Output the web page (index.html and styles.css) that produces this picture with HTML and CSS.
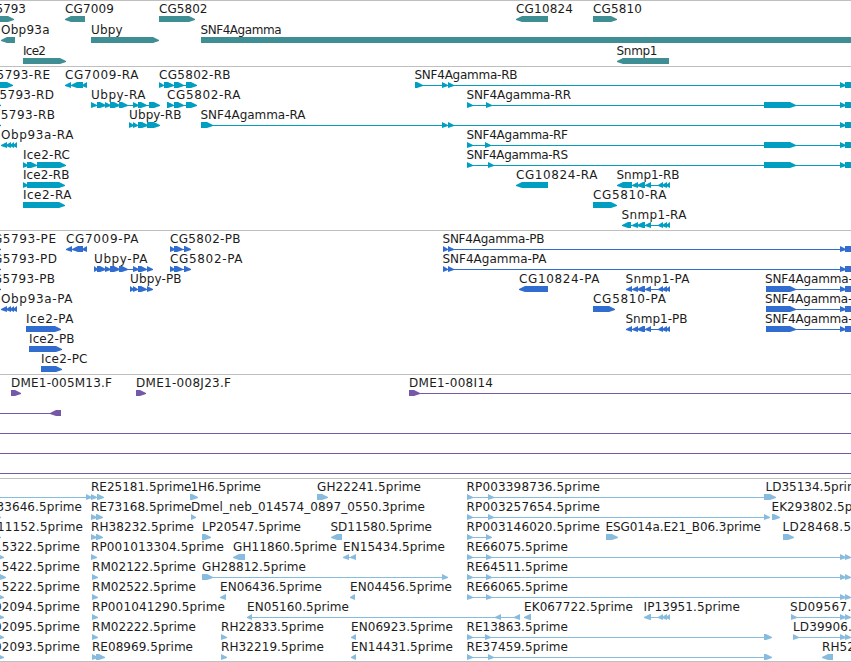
FILE: index.html
```
<!DOCTYPE html>
<html lang="en">
<head>
  <meta charset="UTF-8" />
  <title>Genome Browser</title>
  <link rel="stylesheet" href="styles.css">
</head>
<body>

<div class="browser">
  <div class="track genes" id="genes"></div>
  <div class="track transcripts" id="transcripts"></div>
  <div class="track proteins" id="proteins"></div>
  <div class="track clones" id="clones"></div>
  <div class="track ests" id="ests"></div>
</div>

<script src="tracks.js"></script>
</body>
</html>
```

FILE: styles.css
```
body {
  margin: 0;
  background: #fff;
  overflow: hidden;
}
.browser { width: 851px; border-bottom: 1px solid #bfbfbf; }
.track { border-top: 1px solid #bfbfbf; }
.track svg { display: block; width: 851px; overflow: hidden; }
.track text { font-family: "DejaVu Sans", sans-serif; font-size: 12px; fill: #1c1c1c; }
.track rect { shape-rendering: crispEdges; }
.genes { color: #3f8e94; }
.transcripts { color: #009ec1; }
.proteins { color: #316dce; }
.clones { color: #7558a8; }
.ests { color: #87bcde; }
.glyph { fill: currentColor; }
```

FILE: tracks.js
```
// feature: [label, label start, label end, strand, exons, line start, line end]
const END = 860;
const tail = [[840, 846], [845, END]];
const pair = [[840, 846], [845, 851]];

const tracks = {
  genes: { height: 65, pitch: 21, rows: [
    [['CG5793', -22, 26, 1, [[-8, 14]]], ['CG7009', 65, 114, -1, [[65, 85]]], ['CG5802', 159, 207.5, 1, [[159, 195]]],
     ['CG10824', 516, 573, -1, [[516, 548]]], ['CG5810', 593, 642, 1, [[593, 617]]]],
    [['Obp93a', 1, 49.5, -1, [[1, 15]]], ['Ubpy', 91, 122.5, 1, [[91, 159]]], ['SNF4Agamma', 200.5, 281.5, 1, [[201, END]]]],
    [['Ice2', 23, 46, 1, [[23, 66]]], ['Snmp1', 616.5, 657.5, -1, [[617, 669]]]]
  ] },
  transcripts: { height: 163, pitch: 20, rows: [
    [['CG5793-RE', -22, 50, 1, [[-8, 13]]], ['CG7009-RA', 65, 138.5, -1, [[65, 71], [71, 83], [82, 87]]],
     ['CG5802-RB', 159, 230.5, 1, [[159, 164], [164, 174], [174, 184], [186, 197]]],
     ['SNF4Agamma-RB', 414.5, 517.5, 1, [[415, 423], [442, 448], [448, 454], ...tail]]],
    [['CG5793-RD', -19, 54, 1, [[-5, 1]]],
     ['Ubpy-RA', 91, 145.5, 1, [[91, 97], [97, 106], [105, 111], [110, 120], [119, 128], [133, 139], [138, 147], [149, 160]]],
     ['CG5802-RA', 167, 240.5, 1, [[167, 174], [174, 184], [186, 197]]],
     ['SNF4Agamma-RR', 466.5, 571, 1, [[467, 473], [486, 492], [764, 796], ...tail]]],
    [['CG5793-RB', -18, 55, 1, [[-5, 1]]], ['Ubpy-RB', 129, 181.5, 1, [[129, 134], [133, 138], [138, 148], [147, 160]]],
     ['SNF4Agamma-RA', 200.5, 305.5, 1, [[201, 213], [442, 448], [448, 454], ...tail]]],
    [['Obp93a-RA', 1, 73.5, -1, [[1, 7], [6, 11], [10, 14], [13, 17]]],
     ['SNF4Agamma-RF', 466.5, 568, 1, [[467, 473], [485, 491], [764, 796], ...tail]]],
    [['Ice2-RC', 23, 70, 1, [[23, 28], [27, 37], [37, 66]]],
     ['SNF4Agamma-RS', 466.5, 568, 1, [[467, 473], [488, 494], [764, 796], ...tail]]],
    [['Ice2-RB', 23, 69.5, 1, [[23, 28], [27, 65]]], ['CG10824-RA', 516, 597.5, -1, [[516, 548]]],
     ['Snmp1-RB', 616.5, 679.5, -1, [[617, 632], [632, 638], [637, 645], [645, 651], [658, 663], [662, 667], [666, 670]]]],
    [['Ice2-RA', 23, 71.5, 1, [[23, 65]]], ['CG5810-RA', 593, 666.5, 1, [[593, 617]]]],
    [['Snmp1-RA', 621.5, 686.5, -1, [[622, 631], [632, 638], [637, 645], [645, 651], [658, 663], [662, 667], [666, 670]]]]
  ] },
  proteins: { height: 143, pitch: 20, rows: [
    [['CG5793-PE', -16, 56, 1, [[-5, 1]]], ['CG7009-PA', 66, 138.5, -1, [[66, 72], [72, 83], [82, 87]]],
     ['CG5802-PB', 170, 240.5, 1, [[170, 175], [174, 183], [184, 191]]],
     ['SNF4Agamma-PB', 442.5, 544.5, 1, [[443, 448], [448, 454], ...tail]]],
    [['CG5793-PD', -16, 57, 1, [[-5, 1]]],
     ['Ubpy-PA', 94, 147.5, 1, [[94, 98], [97, 106], [105, 111], [110, 120], [119, 128], [133, 139], [138, 147], [147, 153]]],
     ['CG5802-PA', 170, 242.5, 1, [[170, 175], [174, 183], [184, 191]]],
     ['SNF4Agamma-PA', 442.5, 546.5, 1, [[443, 448], [448, 454], ...tail]]],
    [['CG5793-PB', -16, 55, 1, [[-5, 1]]], ['Ubpy-PB', 130, 181.5, 1, [[130, 134], [133, 138], [138, 147], [147, 153]]],
     ['CG10824-PA', 519, 599.5, -1, [[519, 548]]],
     ['Snmp1-PA', 625.5, 689.5, -1, [[626, 632], [632, 638], [637, 645], [645, 651], [658, 663], [662, 667], [666, 670]]],
     ['SNF4Agamma-PR', 765, 868, 1, [[766, 796], ...tail]]],
    [['Obp93a-PA', 1, 72.5, -1, [[1, 7], [6, 11], [10, 14], [13, 17]]], ['CG5810-PA', 593, 666, 1, [[593, 615]]],
     ['SNF4Agamma-PF', 765, 866, 1, [[766, 796], ...tail]]],
    [['Ice2-PA', 26, 73.5, 1, [[26, 61]]],
     ['Snmp1-PB', 625.5, 687.5, -1, [[626, 632], [632, 638], [637, 645], [645, 651], [658, 663], [662, 667], [666, 670]]],
     ['SNF4Agamma-PS', 765, 867, 1, [[766, 796], ...tail]]],
    [['Ice2-PB', 29, 74.5, 1, [[29, 62]]]],
    [['Ice2-PC', 41, 87.5, 1, [[41, 62]]]]
  ] },
  clones: { height: 103, pitch: 20, rows: [
    [['DME1-005M13.F', 11, 112, 1, [[11, 21]]], ['DME1-008J23.F', 136, 231, 1, [[136, 146]]],
     ['DME1-008I14', 409, 493, 1, [[409, 420]], 409, END]],
    [['', 0, 0, -1, [[50, 61]], 0, 50]],
    [['', 0, 0, 1, [], 0, END]],
    [['', 0, 0, 1, [], 0, END]],
    [['', 0, 0, 1, [], 0, END]]
  ] },
  ests: { height: 182, pitch: 20, rows: [
    [['RE25181.5prime', 91, 191.5, 1, [[86, 92], [91, 97], [97, 104]], 0, 104], ['1H6.5prime', 190.5, 261, 1, [[190, 198]]],
     ['GH22241.5prime', 317, 421, 1, [[317, 328]]], ['RP003398736.5prime', 466.5, 600, 1, [[467, 473], [488, 494], [764, 772]]],
     ['LD35134.5prime', 765.5, 866, 1, [[765, 776]]]],
    [['33646.5prime', -3.5, 82, 1, [[-5, 1]]], ['RE73168.5prime', 91, 191.5, 1, [[91, 97], [96, 103]]],
     ['Dmel_neb_014574_0897_0550.3prime', 191, 425, 1, [[191, 196]]],
     ['RP003257654.5prime', 466.5, 600, 1, [[467, 473], [488, 494], [764, 770]]], ['EK293802.5prime', 771.5, 880, 1, [[772, 780]]]],
    [['11152.5prime', -3, 83, 1, [[-5, 1]]], ['RH38232.5prime', 91, 194, 1, [[91, 97], [96, 103]]],
     ['LP20547.5prime', 202, 301, 1, [[202, 211]]], ['SD11580.5prime', 330.5, 432, -1, [[331, 342]]],
     ['RP003146020.5prime', 466.5, 600, 1, [[467, 473], [486, 492]]], ['ESG014a.E21_B06.3prime', 605.5, 761, 1, [[606, 618]]],
     ['LD28468.5prime', 782.5, 888, 1, [[783, 794]]]],
    [['15322.5prime', -6, 80, 1, [[-3, 4]]], ['RP001013304.5prime', 91, 224, 1, [[91, 97]]],
     ['GH11860.5prime', 233, 337, -1, [[233, 245]]], ['EN15434.5prime', 343, 445, -1, [[343, 349], [350, 356]]],
     ['RE66075.5prime', 466.5, 568, 1, [[467, 473], [486, 492], ...pair]]],
    [['15422.5prime', -6, 80, 1, [[-5, 6]]], ['RM02122.5prime', 92, 196, 1, [[92, 98]]],
     ['GH28812.5prime', 202, 306, 1, [[202, 213], [442, 448]]],
     ['RE64511.5prime', 466.5, 568, 1, [[467, 473], [486, 492], ...pair]]],
    [['15222.5prime', -6, 80, 1, [[-3, 4]]], ['RM02522.5prime', 92, 196, 1, [[92, 98]]],
     ['EN06436.5prime', 220, 322, -1, [[220, 226]]], ['EN04456.5prime', 350, 452, -1, [[350, 355]]],
     ['RE66065.5prime', 466.5, 568, 1, [[467, 473], [486, 492], ...pair]]],
    [['02094.5prime', -6, 80, 1, [[-3, 4]]], ['RP001041290.5prime', 92, 225, 1, [[92, 98]]],
     ['EN05160.5prime', 247, 349, -1, [[247, 252], [495, 501], [514, 520]]], ['EK067722.5prime', 524, 633, -1, [[524, 531]]],
     ['IP13951.5prime', 643.5, 740, -1, [[644, 651], [658, 663], [662, 667], [666, 670]]],
     ['SD09567.5prime', 790, 896, 1, [[791, 797], ...pair]]],
    [['02095.5prime', -6, 80, 1, [[-3, 4]]], ['RM02222.5prime', 92, 196, 1, [[92, 98]]],
     ['RH22833.5prime', 221, 324, 1, [[221, 227]]], ['EN06923.5prime', 351, 453, -1, [[351, 356]]],
     ['RE13863.5prime', 466.5, 568, 1, [[467, 473], [485, 491], [764, 772]]], ['LD39906.5prime', 793, 895, 1, [[793, 799], ...pair]]],
    [['02093.5prime', -6, 80, 1, [[-3, 4]]], ['RE08969.5prime', 92, 193, 1, [[92, 98], [96, 105]]],
     ['RH32219.5prime', 221, 324, 1, [[221, 227]]], ['EN14431.5prime', 351, 453, -1, [[351, 356]]],
     ['RE37459.5prime', 466.5, 568, 1, [[467, 473], [488, 494], [764, 772]]], ['RH52317.5prime', 822, 925, -1, [[822, 833]]]]
  ] }
};

// box that narrows to a point on the strand side
function arrow(start, end, strand, top) {
  const head = Math.min(6, end - start);
  const tip = strand > 0 ? end : start;
  const neck = tip - head * strand;
  const back = strand > 0 ? start : end;
  return `<polygon class="glyph" points="${back},${top} ${neck},${top} ${tip},${top + 3} ${tip},${top + 4} ${neck},${top + 6} ${back},${top + 6}"/>`;
}

function drawFeature([label, x1, x2, strand, exons, from, to], top) {
  let out = '';
  if (exons.length > 1 || from !== undefined) {
    const a = from !== undefined ? from : exons[0][0];
    const b = to !== undefined ? to : exons[exons.length - 1][1];
    out += `<rect class="glyph" x="${a}" y="${top + 18}" width="${b - a}" height="1"/>`;
  }
  exons.forEach(([s, e]) => out += arrow(s, e, strand, top + 15));
  if (label) out += `<text x="${x1}" y="${top + 12}" textLength="${x2 - x1}">${label}</text>`;
  return out;
}

Object.entries(tracks).forEach(([id, track]) => {
  let out = '';
  track.rows.forEach((row, i) => row.forEach(f => out += drawFeature(f, i * track.pitch)));
  document.getElementById(id).innerHTML = `<svg height="${track.height}">${out}</svg>`;
});
```
